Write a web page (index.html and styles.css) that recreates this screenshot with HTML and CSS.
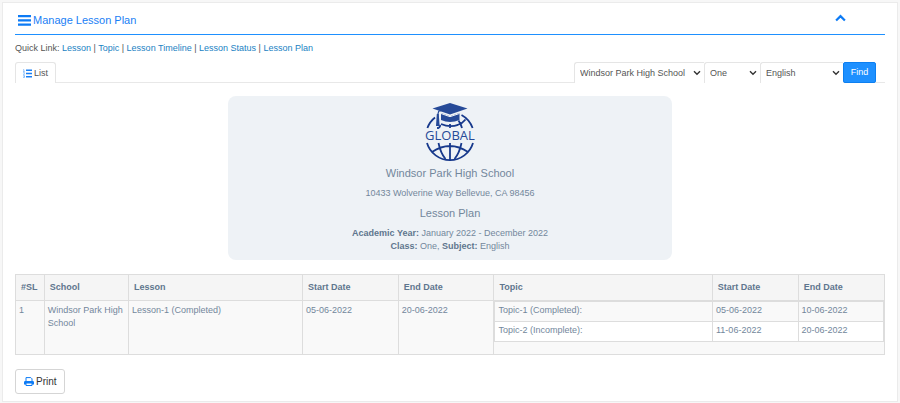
FILE: index.html
```html
<!DOCTYPE html>
<html lang="en">
<head>
<meta charset="utf-8">
<meta name="viewport" content="width=device-width, initial-scale=1">
<title>Manage Lesson Plan</title>
<link rel="stylesheet" href="styles.css">
</head>
<body>
<main class="panel">
  <header class="panel-head">
    <h1 class="panel-title">
      <svg class="icon-bars" viewBox="0 0 13 11" aria-hidden="true"><path d="M0 0h13v2.300H0zM0 4.200h13v2.300H0zM0 8.400h13v2.300H0z"/></svg>
      Manage Lesson Plan
    </h1>
    <button class="collapse" type="button" aria-label="Collapse">
      <svg viewBox="0 0 10 7" aria-hidden="true"><path d="M1 5.8 5 1.8l4 4"/></svg>
    </button>
  </header>

  <nav class="quick">Quick Link: <a href="#">Lesson</a> | <a href="#">Topic</a> | <a href="#">Lesson Timeline</a> | <a href="#">Lesson Status</a> | <a href="#">Lesson Plan</a></nav>

  <div class="tabs">
    <a class="tab" href="#list">
      <svg class="icon-list" viewBox="0 0 9 9" aria-hidden="true"><path d="M3 .5h6v1.4H3zM3 3.8h6v1.4H3zM3 7.1h6v1.4H3z"/><path class="thin" d="M.3.6h.6v2M.2 2.6h1.4M.3 3.6h1v.8l-1 1h1.3M.3 6.5h1.1v2H.2M.6 7.5h.8"/></svg>
      List
    </a>
    <form class="filter">
      <span class="pick pick-school">
        <select aria-label="School"><option>Windsor Park High School</option></select>
        <svg viewBox="0 0 8 6" aria-hidden="true"><path d="M1 1.2l3 3 3-3"/></svg>
      </span>
      <span class="pick pick-class">
        <select aria-label="Class"><option>One</option></select>
        <svg viewBox="0 0 8 6" aria-hidden="true"><path d="M1 1.2l3 3 3-3"/></svg>
      </span>
      <span class="pick pick-subject">
        <select aria-label="Subject"><option>English</option></select>
        <svg viewBox="0 0 8 6" aria-hidden="true"><path d="M1 1.2l3 3 3-3"/></svg>
      </span>
      <button class="find" type="button">Find</button>
    </form>
  </div>

  <section class="summary" id="list">
    <svg class="logo" viewBox="0 0 54 60" role="img" aria-label="Global">
      <g class="globe">
        <path d="M4.400 26A24 24 0 0 1 12 15.500M38.500 13A24 24 0 0 1 49.600 26M4 41A24 24 0 0 0 50 41"/>
        <path d="M16 26l1.500-3M27 22v4M39 26q-1-4-3.500-7.500M34.500 23q5-1.500 8-5.500M18 22q9 4 17 .800"/>
        <path d="M15.500 41q2 10 7 16M27 41v17M38.500 41q-2 10-7 16M9 50q18-12 36 0"/>
      </g>
      <path class="cap" d="M27 1 44.500 6.500 27 12.500 9.500 6.500z"/>
      <path class="cap" d="M18 11l9 3.200 9.500-3.200v7q-9.500 4-18.500 0z"/>
      <path class="gown" d="M18 11.500l9 3.200 9.500-3.200"/>
      <path class="cord" d="M27 6.500 15.700 9.200Q14.800 11 14.700 16"/>
      <path class="cap" d="M13.800 12h2l.8 12h-3.600zM14 25h2v2h-2z"/>
      <text x="27" y="38">GLOBAL</text>
    </svg>
    <h2>Windsor Park High School</h2>
    <p>10433 Wolverine Way Bellevue, CA 98456</p>
    <h2>Lesson Plan</h2>
    <p><b>Academic Year:</b> January 2022 - December 2022<br><b>Class:</b> One, <b>Subject:</b> English</p>
  </section>

  <table class="plan">
    <colgroup><col class="c-sl"><col class="c-school"><col class="c-lesson"><col class="c-date"><col class="c-date"><col class="c-topic"><col class="c-tdate"><col class="c-tdate"></colgroup>
    <thead>
      <tr><th>#SL</th><th>School</th><th>Lesson</th><th>Start Date</th><th>End Date</th><th>Topic</th><th>Start Date</th><th>End Date</th></tr>
    </thead>
    <tbody>
      <tr>
        <td>1</td><td>Windsor Park High School</td><td>Lesson-1 (Completed)</td><td>05-06-2022</td><td>20-06-2022</td>
        <td class="nest" colspan="3">
          <table class="topics">
            <colgroup><col class="t-topic"><col class="t-date"><col class="t-date"></colgroup>
            <tbody>
              <tr><td>Topic-1 (Completed):</td><td>05-06-2022</td><td>10-06-2022</td></tr>
              <tr><td>Topic-2 (Incomplete):</td><td>11-06-2022</td><td>20-06-2022</td></tr>
            </tbody>
          </table>
        </td>
      </tr>
    </tbody>
  </table>

  <button class="print" type="button">
    <svg viewBox="0 0 10 9" aria-hidden="true"><path class="line" d="M2 4.500V.6h4.800L8 1.800v2.700"/><path d="M1.200 4h7.600q1.200 0 1.200 1.200V7.500H0V5.200Q0 4 1.200 4z"/><path class="line" d="M2 6h6v2.500H2z"/></svg>
    Print
  </button>
</main>
</body>
</html>
```
FILE: styles.css
```css
* { box-sizing: border-box; }

body {
  margin: 0;
  padding: 2px;
  background: #f7f7f7;
  color: #555;
  font: 9px/13px "Liberation Sans", Arial, sans-serif;
}

a { color: #1a82c3; text-decoration: none; }
button, select { font: inherit; margin: 0; }

.panel {
  padding: 7px 12px 7px;
  background: #fff;
  border: 1px solid #ebebeb;
}

.panel-head {
  display: flex;
  justify-content: space-between;
  height: 25px;
  padding: 0 39px 0 3px;
  border-bottom: 1px solid #1e90ff;
}

.panel-title {
  display: flex;
  align-items: center;
  gap: 2px;
  height: 20px;
  margin: 0;
  color: #1a80f5;
  font-size: 11px;
  font-weight: 400;
}
.icon-bars { width: 13px; height: 11px; fill: #0d7bf5; }

.collapse {
  height: 16px;
  padding: 0;
  border: 0;
  background: none;
}
.collapse svg { display: block; width: 11px; height: 8px; }
.collapse path { fill: none; stroke: #0d7bf5; stroke-width: 2; }

.quick { margin: 7px 0; }

.tabs {
  display: flex;
  justify-content: space-between;
  height: 21px;
  margin-bottom: 13px;
  padding-right: 9px;
  border-bottom: 1px solid #e8e8e8;
}
.tab {
  display: flex;
  align-items: center;
  gap: 2px;
  height: 21px;
  padding: 0 7px;
  border: 1px solid #e5e5e5;
  border-bottom: 0;
  border-radius: 3px 3px 0 0;
  background: #fff;
  color: #555;
}
.icon-list { width: 9px; height: 9px; fill: #1a80f5; }
.icon-list .thin { fill: none; stroke: #1a80f5; stroke-width: .5; }

.filter { display: flex; height: 21px; }
.pick { position: relative; }
.pick-school { width: 130px; }
.pick-class { width: 56px; }
.pick-subject { width: 83px; }
.pick select {
  appearance: none;
  display: block;
  width: 100%;
  height: 21px;
  padding: 0 5px;
  border: 1px solid #e5e5e5;
  border-width: 1px 0 0 1px;
  border-radius: 3px 0 0 0;
  background: #fff;
  color: #555;
}
.pick svg {
  position: absolute;
  right: 3px;
  top: 8px;
  width: 8px;
  height: 6px;
  pointer-events: none;
}
.pick path { fill: none; stroke: #333; stroke-width: 1.4; }
.find {
  width: 33px;
  padding: 0;
  border: 1px solid #0d7ff0;
  border-radius: 2px;
  background: #1e90ff;
  color: #fff;
}

.summary {
  width: 51%;
  margin: 0 auto 14px;
  padding: 6px 12px 7px;
  border-radius: 8px;
  background: #eef2f6;
  color: #73879c;
  text-align: center;
}
.summary h2 {
  margin: 0 0 7px;
  font-size: 11px;
  line-height: 14px;
  font-weight: 400;
}
.summary p { margin: 0 0 6px; }
.summary p:last-child { margin: 0; }
.summary b, .plan th { color: #5f768e; }

.logo { display: block; width: 54px; height: 60px; margin: 0 auto 4px; }
.globe path { fill: none; stroke: #17398c; stroke-width: 1.8; }
.cap { fill: #264a98; }
.gown { fill: none; stroke: #eef2f6; stroke-width: 1; }
.cord { fill: none; stroke: #264a98; stroke-width: 1.2; }
.logo text {
  fill: #264a98;
  font: 13px "Open Sans", sans-serif;
  text-anchor: middle;
}

table { width: 100%; table-layout: fixed; border-collapse: collapse; }
.plan { color: #73879c; border: 1px solid #ddd; }
.plan th, .plan td { border: 1px solid #ddd; text-align: left; vertical-align: top; }
.plan th { height: 26px; padding: 6px 5px; background: #f5f5f5; }
.plan td { padding: 3px; background: #f9f9f9; }
.plan > tbody > tr { height: 54px; }
.c-sl { width: 3.3%; }
.c-school { width: 9.7%; }
.c-lesson { width: 20%; }
.c-date { width: 11%; }
.c-topic { width: 25.1%; }
.c-tdate { width: 9.9%; }
.plan .nest { padding: 0; }
.plan .topics td { height: 20px; padding: 2px 3px; }
.t-date { width: 22%; }
.topics tr + tr td { background: #fff; }

.print {
  display: flex;
  align-items: center;
  gap: 2px;
  height: 25px;
  margin-top: 14px;
  padding: 0 7px 0 8px;
  border: 1px solid #d5d5d5;
  border-radius: 3px;
  background: #fff;
  color: #333;
  font-size: 10px;
}
.print svg { width: 10px; height: 9px; fill: #0d7bf5; }
.print .line { fill: #fff; stroke: #0d7bf5; stroke-width: 1; }
```
